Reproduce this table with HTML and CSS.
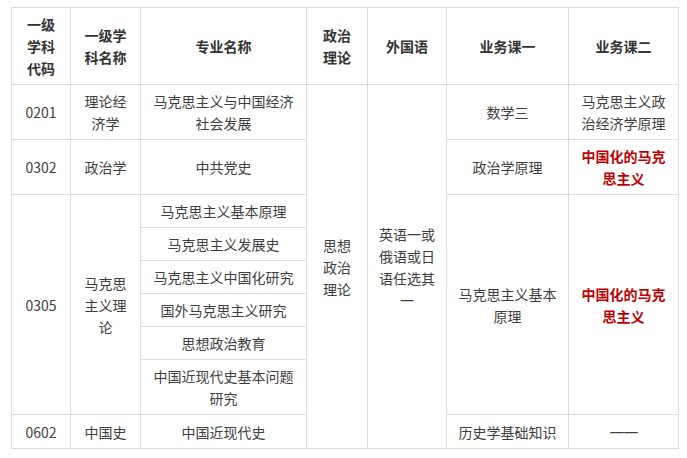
FILE: index.html
```html
<!DOCTYPE html>
<html lang="zh-CN">
<head>
<meta charset="utf-8">
<link rel="stylesheet" href="styles.css">
</head>
<body>
<table class="tbl">
  <colgroup>
    <col class="c1"><col class="c2"><col class="c3"><col class="c4"><col class="c5"><col class="c6"><col class="c7">
  </colgroup>
  <tr class="head">
    <th>一级学科代码</th>
    <th>一级学科名称</th>
    <th>专业名称</th>
    <th>政治理论</th>
    <th>外国语</th>
    <th>业务课一</th>
    <th>业务课二</th>
  </tr>
  <tr>
    <td>0201</td>
    <td>理论经济学</td>
    <td>马克思主义与中国经济社会发展</td>
    <td rowspan="10">思想政治理论</td>
    <td rowspan="10">英语一或俄语或日语任选其一</td>
    <td>数学三</td>
    <td>马克思主义政治经济学原理</td>
  </tr>
  <tr>
    <td>0302</td>
    <td>政治学</td>
    <td>中共党史</td>
    <td>政治学原理</td>
    <td class="red">中国化的马克思主义</td>
  </tr>
  <tr class="sub">
    <td rowspan="6">0305</td>
    <td rowspan="6">马克思主义理论</td>
    <td>马克思主义基本原理</td>
    <td rowspan="6">马克思主义基本原理</td>
    <td rowspan="6" class="red">中国化的马克思主义</td>
  </tr>
  <tr class="sub"><td>马克思主义发展史</td></tr>
  <tr class="sub"><td>马克思主义中国化研究</td></tr>
  <tr class="sub"><td>国外马克思主义研究</td></tr>
  <tr class="sub"><td>思想政治教育</td></tr>
  <tr><td>中国近现代史基本问题研究</td></tr>
  <tr>
    <td>0602</td>
    <td>中国史</td>
    <td>中国近现代史</td>
    <td>历史学基础知识</td>
    <td><span class="dash">——</span></td>
  </tr>
</table>
</body>
</html>
```

FILE: styles.css
```css
html, body {
  margin: 0;
  padding: 0;
  background: #ffffff;
}
body {
  padding: 7px 0 0 11px;
  font-family: "Noto Sans CJK SC", "Noto Sans", sans-serif;
  font-size: 14px;
  line-height: 22px;
  color: #3e3e3e;
}
.tbl {
  border-collapse: collapse;
  table-layout: fixed;
  width: 667px;
}
.c1 { width: 59px; }
.c2 { width: 70px; }
.c3 { width: 166px; }
.c4 { width: 61px; }
.c5 { width: 79px; }
.c6 { width: 122px; }
.c7 { width: 110px; }
.tbl th,
.tbl td {
  border: 1px solid #dcdcdc;
  padding: 5px 10px;
  text-align: center;
  vertical-align: middle;
  word-break: break-all;
  font-weight: normal;
}
.tbl th {
  font-weight: bold;
  color: #333333;
}
.tbl .red {
  color: #c00000;
  font-weight: bold;
}
.dash {
  font-family: "DejaVu Sans", sans-serif;
  font-size: 15px;
  letter-spacing: -1px;
}
```
